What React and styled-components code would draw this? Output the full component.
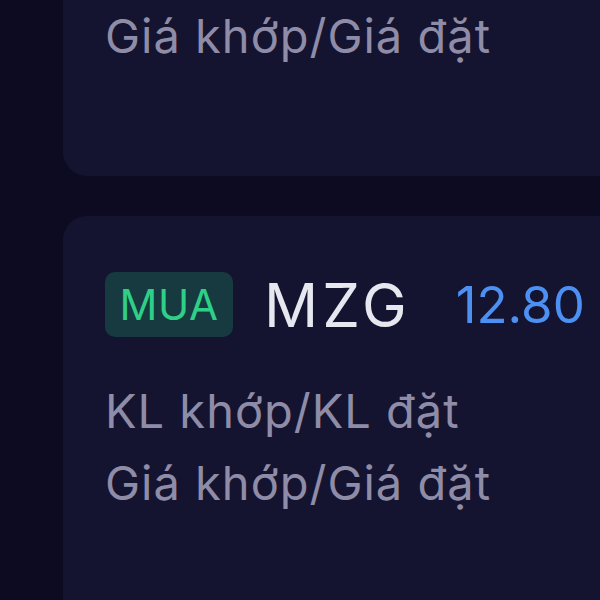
import React from "react";
import styled, { createGlobalStyle } from "styled-components";

const Global = createGlobalStyle`
  html, body {
    margin: 0;
    padding: 0;
    background: #0c0b21;
    overflow: hidden;
  }
  body {
    font-family: Inter, "Noto Sans", "DejaVu Sans", sans-serif;
    -webkit-font-smoothing: antialiased;
  }
`;

const Page = styled.div`
  width: 600px;
  height: 600px;
  overflow: hidden;
  background: #0c0b21;
`;

const List = styled.div`
  display: flex;
  flex-direction: column;
  gap: 40px;
  margin-top: -231px;
  padding-left: 63px;
`;

const Card = styled.div`
  width: 760px;
  box-sizing: border-box;
  background: #151430;
  border-radius: 24px;
  padding: 56px 0 104px 42px;
`;

const Header = styled.div`
  display: flex;
  align-items: center;
  height: 65px;
`;

const Side = styled.div`
  width: 128px;
  height: 65px;
  border-radius: 10px;
  display: flex;
  align-items: center;
  justify-content: center;
  font-size: 42px;
  letter-spacing: 0.5px;
  color: ${(p) => (p.$buy ? "#2fcf87" : "#ef5a6a")};
  background: ${(p) => (p.$buy ? "#163a3f" : "#3a1a2c")};
`;

const Symbol = styled.div`
  margin-left: 31px;
  font-size: 60px;
  letter-spacing: 4px;
  color: #e7e7ef;
`;

const Price = styled.div`
  margin-left: 45px;
  font-size: 51px;
  color: #4b90f2;
`;

const Rows = styled.div`
  margin-top: 38px;
`;

const Row = styled.div`
  display: grid;
  grid-template-columns: 493px auto;
  font-size: 47px;
  letter-spacing: 1px;
  line-height: 72px;
`;

const Label = styled.span`
  color: #8f8ca8;
  white-space: nowrap;
`;

const Value = styled.span`
  color: #c8c8d4;
  white-space: nowrap;
`;

const orders = [
  { side: "MUA", buy: true, symbol: "HPG", price: "27.50", qty: "0/1,000", px: "0.00/27.50" },
  { side: "MUA", buy: true, symbol: "MZG", price: "12.80", qty: "0/500", px: "0.00/12.80" },
];

export default function App() {
  return (
    <Page>
      <Global />
      <List>
        {orders.map((o) => (
          <Card key={o.symbol}>
            <Header>
              <Side $buy={o.buy}>{o.side}</Side>
              <Symbol>{o.symbol}</Symbol>
              <Price>{o.price}</Price>
            </Header>
            <Rows>
              <Row>
                <Label>KL khớp/KL đặt</Label>
                <Value>{o.qty}</Value>
              </Row>
              <Row>
                <Label>Giá khớp/Giá đặt</Label>
                <Value>{o.px}</Value>
              </Row>
            </Rows>
          </Card>
        ))}
      </List>
    </Page>
  );
}
